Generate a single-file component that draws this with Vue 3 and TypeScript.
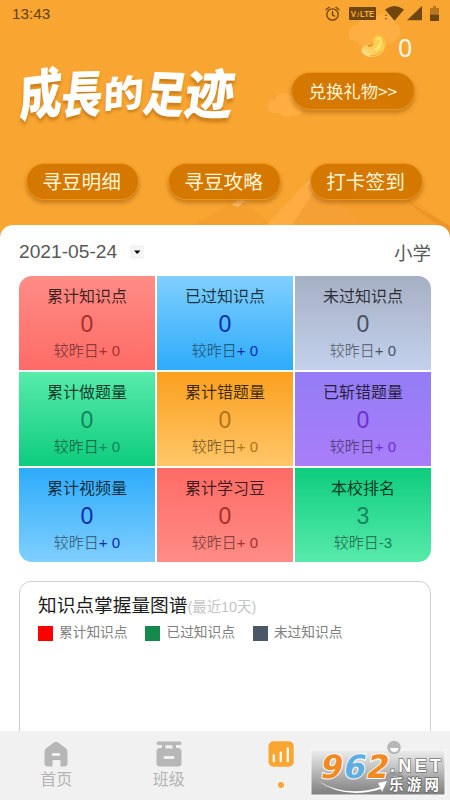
<script setup lang="ts">
interface Tile {
  title: string
  value: string
  change: string
  theme: string
}

const actions: string[] = ['寻豆明细', '寻豆攻略', '打卡签到']

const headline: { char: string; cls: string }[] = [
  { char: '成', cls: 'c1' },
  { char: '長', cls: 'c2' },
  { char: '的', cls: 'c3' },
  { char: '足', cls: 'c4' },
  { char: '迹', cls: 'c5' },
]

const tiles: Tile[] = [
  { title: '累计知识点', value: '0', change: '+ 0', theme: 'red' },
  { title: '已过知识点', value: '0', change: '+ 0', theme: 'blue' },
  { title: '未过知识点', value: '0', change: '+ 0', theme: 'gray' },
  { title: '累计做题量', value: '0', change: '+ 0', theme: 'green' },
  { title: '累计错题量', value: '0', change: '+ 0', theme: 'orange' },
  { title: '已斩错题量', value: '0', change: '+ 0', theme: 'purple' },
  { title: '累计视频量', value: '0', change: '+ 0', theme: 'blue flip' },
  { title: '累计学习豆', value: '0', change: '+ 0', theme: 'red flip' },
  { title: '本校排名', value: '3', change: '-3', theme: 'green flip' },
]

const legend: { label: string; cls: string }[] = [
  { label: '累计知识点', cls: 'l-red' },
  { label: '已过知识点', cls: 'l-green' },
  { label: '未过知识点', cls: 'l-slate' },
]
</script>

<template>
  <div class="screen">
    <header class="hero">
      <svg class="scenery" viewBox="0 0 450 250" width="450" height="250" aria-hidden="true">
        <g fill="#ffae42">
          <path d="M351 40C346 34 349 26 358 25C360 16 370 13 376 17C382 10 394 13 395 23C402 26 402 36 396 40C390 47 382 45 378 43C370 49 360 48 358 42Z" />
          <path d="M268 108C267 102 271 99 275 100C277 93 286 90 291 96C300 94 305 99 303 108C303 115 297 117 292 115C287 118 281 117 279 113C273 114 269 112 268 108Z" />
        </g>
        <path d="M185 230L240 199L277 228L313 176L337 205L369 162L450 228V250H185Z" fill="#f59f2e" />
        <path d="M262 230L313 175L318 190L289 230Z" fill="#ffad43" />
        <path d="M289 230L318 185L340 203L365 230Z" fill="#f5a035" />
        <path d="M231 205L240 199L251 203L244 202L238 207Z" fill="#ffbd69" />
        <path d="M305 186L313 177L315 182Z" fill="#ffc273" />
        <path d="M404 199L450 226V235Z" fill="#ee9427" />
      </svg>

      <div class="status">
        <span class="clock">13:43</span>
        <svg class="status-icons" viewBox="0 0 120 20" width="120" height="20" aria-hidden="true">
          <g fill="none" stroke="#704610" stroke-width="1.3">
            <circle cx="12.5" cy="10.5" r="5.7" />
            <path d="M12.5 7V10.9L15 12.500M5.500 6L9.500 3M15.500 3L19.500 6" />
          </g>
          <rect x="29" y="3" width="27" height="13" rx="1" fill="#704610" />
          <text x="30.8" y="13" class="volte" textLength="23.4" lengthAdjust="spacingAndGlyphs">V♪LTE</text>
          <path d="M65 5.500Q74.500 -1.500 84 5.500L74.500 16.800Z" fill="#704610" />
          <path d="M66 10L67.500 12H64.500ZM66 16L67.500 14H64.500Z" fill="#a76b1b" />
          <path d="M87 16.200L102 2V16.200Z" fill="#704610" />
          <path d="M110 4H113V2H116V4H119V10.500H110Z" fill="#b8771f" />
          <path d="M110 10.500H119V17H110Z" fill="#704610" />
        </svg>
      </div>

      <div class="banner">
        <h1 class="headline">
          <span v-for="h in headline" :key="h.char" :class="h.cls">{{ h.char }}</span>
        </h1>
        <div class="wallet">
          <div class="balance">
            <svg viewBox="0 0 28 26" width="28" height="26" aria-hidden="true">
              <defs>
                <linearGradient id="bean" x1="0" y1="1" x2="1" y2="0">
                  <stop offset="0" stop-color="#fff0ad" />
                  <stop offset=".3" stop-color="#ffcf62" />
                  <stop offset=".7" stop-color="#ffcf4a" />
                  <stop offset="1" stop-color="#f9ad2b" />
                </linearGradient>
              </defs>
              <path d="M1.500 18C1 13.500 5 12 9 13C12 13.500 13 11 13.200 8C14 2.500 19 .8 23 3C27 6 26.500 15 21.500 20.500C16.500 25.500 5 25.500 1.500 18Z" fill="url(#bean)" />
              <path d="M17.500 5.500C21 3.500 22 8 20 12Q18.500 15.500 15 16.500" fill="none" stroke="#ffe679" stroke-width="2.200" stroke-linecap="round" />
              <path d="M8 13Q12 14 12.800 10.500" fill="none" stroke="#d97410" stroke-width="1" />
              <path d="M10 23Q17 23 21 18" fill="none" stroke="#f5a22b" stroke-width="1" />
            </svg>
            <span>0</span>
          </div>
          <button class="pill redeem">兑换礼物&gt;&gt;</button>
        </div>
      </div>

      <div class="actions">
        <button v-for="a in actions" :key="a" class="pill">{{ a }}</button>
      </div>
    </header>

    <main class="sheet">
      <div class="filters">
        <span class="date">2021-05-24</span>
        <span class="drop"><svg viewBox="0 0 14 14" width="14" height="14"><path d="M4 5.500H10.500L7.200 9Z" fill="#000" /></svg></span>
        <span class="grade">小学</span>
      </div>

      <section class="tiles">
        <article v-for="t in tiles" :key="t.title" class="tile" :class="t.theme">
          <h2>{{ t.title }}</h2>
          <strong>{{ t.value }}</strong>
          <p>较昨日<b>{{ t.change }}</b></p>
        </article>
      </section>

      <section class="chart">
        <h3>知识点掌握量图谱<small>(最近10天)</small></h3>
        <ul>
          <li v-for="l in legend" :key="l.label"><i :class="l.cls"></i>{{ l.label }}</li>
        </ul>
      </section>
    </main>

    <nav class="tabs">
      <a class="tab">
        <svg viewBox="0 0 26 26" width="26" height="26">
          <path d="M11 1.400Q13 0 15 1.400L22.500 7Q24.500 8.500 24.500 11V22Q24.500 25.500 21 25.500H17.500V20Q17.500 19 16.500 19H10.500Q9.500 19 9.500 20V25.500H5Q1.500 25.500 1.500 22V11Q1.500 8.500 3.500 7Z" fill="#b7b7b7" />
          <rect x="8.800" y="12" width="8.400" height="3" rx="1.500" fill="#f1f1f1" />
        </svg>
        <span>首页</span>
      </a>
      <a class="tab">
        <svg viewBox="0 0 26 26" width="26" height="26">
          <path d="M2 .5H24Q25.500 .5 25.500 2.200T24 4H20V7H22Q25.500 7 25.500 10.500V22Q25.500 25.500 22 25.500H4Q.5 25.500 .5 22V10.500Q.5 7 4 7H6V4H2Q.5 4 .5 2.200T2 .5Z" fill="#b7b7b7" />
          <path d="M9.500 4.200H16.500V7.500H9.500Z" fill="#f1f1f1" />
          <rect x="7.500" y="15" width="11" height="3" rx="1.500" fill="#f1f1f1" />
        </svg>
        <span>班级</span>
      </a>
      <a class="tab">
        <svg viewBox="0 0 26 26" width="26" height="26">
          <rect x=".5" y=".2" width="25.200" height="25.600" rx="5" fill="#faa632" />
          <path d="M5.800 14.500V20M12.800 11.500V20M19.800 7.500V20" stroke="#fff8ec" stroke-width="2.400" stroke-linecap="round" />
        </svg>
        <i class="dot"></i>
      </a>
      <svg class="watermark" viewBox="0 0 134 45" width="134" height="45">
        <defs>
          <linearGradient id="steel" x1="0" y1="0" x2="0" y2="1">
            <stop offset="0" stop-color="#eeeeee" />
            <stop offset=".45" stop-color="#bcbcbc" />
            <stop offset="1" stop-color="#7d7d7d" />
          </linearGradient>
        </defs>
        <rect width="134" height="45" fill="url(#steel)" stroke="#f8f8f8" stroke-width="1" />
        <circle cx="83" cy="-2.500" r="6.800" fill="#b7b7b7" />
        <path d="M79 -2H87.500Q87 2 83.200 2T79 -2Z" fill="#fff" />
        <path d="M74 32Q76 24 83 24T94 31" fill="none" stroke="#9b9b9b" stroke-width="4" />
        <g class="numerals" transform="translate(8 27.500) skewX(-12)">
          <text x="0" y="0" textLength="22" lengthAdjust="spacingAndGlyphs" fill="#f28a21">9</text>
          <text x="23" y="0" textLength="22" lengthAdjust="spacingAndGlyphs" fill="#5eaee0">6</text>
          <text x="46" y="0" textLength="22" lengthAdjust="spacingAndGlyphs" fill="#f28a21">2</text>
        </g>
        <path d="M7 31Q36 48 69 37L67 33L76 31L71 42L70 39Q34 50 7 31Z" fill="#fff" />
        <text x="79" y="22" class="net" textLength="51" lengthAdjust="spacing">.NET</text>
        <text x="78" y="39.500" class="leyou" textLength="50" lengthAdjust="spacing">乐游网</text>
      </svg>
    </nav>
  </div>
</template>

<style>
body {
  margin: 0;
}
</style>

<style scoped>
* {
  box-sizing: border-box;
}
.screen {
  position: relative;
  width: 450px;
  height: 800px;
  overflow: hidden;
  display: flex;
  flex-direction: column;
  background: #f8a531;
  font-family: "Liberation Sans", "Noto Sans CJK SC", sans-serif;
  font-weight: 400;
}
.hero {
  height: 225px;
  flex: none;
}
.scenery {
  position: absolute;
  left: 0;
  top: 0;
}
.status {
  position: relative;
  height: 28px;
  padding: 4px 10px 0 12px;
  display: flex;
  justify-content: space-between;
}
.clock {
  font-size: 15.3px;
  line-height: 20px;
  color: #65400f;
}
.volte {
  font: bold 9px "Liberation Sans", "DejaVu Sans", sans-serif;
  fill: #faad45;
}
.banner {
  position: relative;
  display: flex;
  justify-content: space-between;
  height: 135px;
}
.headline {
  display: flex;
  margin: 31px 0 0 18px;
  height: 65px;
  font: 900 46px/64px "Noto Sans CJK SC", sans-serif;
  color: #fff;
  text-shadow: 0 3px 3px rgba(151, 83, 0, 0.45);
}
.headline span {
  display: block;
  width: 42px;
  transform-origin: center;
}
.headline .c1 {
  transform: rotate(-7deg) skewX(-8deg) scale(0.94, 1.16);
}
.headline .c2 {
  width: 41px;
  transform: rotate(-2deg) skewX(-9deg) scale(0.9, 1.08);
}
.headline .c3 {
  width: 42px;
  transform: rotate(-6deg) skewX(-8deg) scale(0.88, 0.8);
}
.headline .c4 {
  width: 44px;
  transform: rotate(2deg) skewX(-8deg) scale(0.9, 1.06);
}
.headline .c5 {
  transform: skewX(-8deg) scale(1.08, 1.16);
}
.wallet {
  width: 159px;
  padding-top: 5px;
}
.balance {
  height: 30px;
  padding-left: 69px;
  display: flex;
  align-items: flex-start;
  gap: 10px;
}
.balance span {
  margin-top: -1px;
  font: 400 25px/30px "Noto Sans", "Open Sans", sans-serif;
  color: #fff8e8;
}
.pill {
  width: 113px;
  height: 37px;
  padding: 0 2px 1px 0;
  border: 1px solid #ed951e;
  border-radius: 19px;
  background: #d47800;
  box-shadow: 0 3px 4px rgba(143, 79, 0, 0.48);
  color: #fff4d5;
  font: 400 19.7px/34px "Noto Sans CJK SC", sans-serif;
  text-align: center;
  white-space: nowrap;
}
.redeem {
  display: block;
  width: 124px;
  height: 38px;
  margin-top: 9px;
  padding-right: 0;
  font-family: "Noto Sans CJK SC", sans-serif;
  font-size: 17.3px;
}
.actions {
  position: relative;
  display: flex;
  gap: 29px;
  padding-left: 26px;
}
.sheet {
  position: relative;
  flex: 1;
  padding: 0 19px;
  background: #fff;
  border-radius: 13px 13px 0 0;
}
.filters {
  height: 51px;
  display: flex;
  align-items: center;
  color: #585858;
  padding-top: 2px;
}
.date {
  font-size: 19.2px;
  width: 111px;
}
.drop {
  width: 14px;
  height: 14px;
  background: #f4f4f4;
}
.drop svg {
  display: block;
}
.grade {
  margin-left: auto;
  font-size: 18.5px;
}
.tiles {
  display: grid;
  grid-template-columns: repeat(3, 1fr);
  grid-template-rows: repeat(3, 1fr);
  gap: 2px;
  height: 286px;
  border-radius: 13px;
  overflow: hidden;
}
.tile {
  display: flex;
  flex-direction: column;
  align-items: center;
  background: linear-gradient(var(--from), var(--to));
}
.tile.flip {
  background: linear-gradient(var(--to), var(--from));
}
.tile h2 {
  margin: 10px 0 0;
  font-size: 16px;
  line-height: 22px;
  font-weight: 400;
  color: rgba(0, 0, 0, 0.76);
}
.tile strong {
  font-size: 23px;
  line-height: 33px;
  font-weight: 400;
  color: var(--num);
}
.tile p {
  margin: 0;
  font-size: 15px;
  line-height: 20px;
  color: rgba(0, 0, 0, 0.47);
}
.tile b {
  font-weight: 400;
  color: var(--num);
}
.red {
  --from: #ff8c86;
  --to: #ff6b66;
  --num: #a83028;
}
.blue {
  --from: #80cfff;
  --to: #2dabfa;
  --num: #0a2cb0;
}
.gray {
  --from: #a6b0c4;
  --to: #c3d1ed;
  --num: #46525f;
}
.green {
  --from: #58ebab;
  --to: #0dcc7e;
  --num: #12845a;
}
.orange {
  --from: #fba01e;
  --to: #ffc669;
  --num: #b37416;
}
.purple {
  --from: #937df6;
  --to: #aa7dfa;
  --num: #702fd0;
}
.chart {
  margin-top: 19px;
  height: 180px;
  padding: 11px 18px;
  border: 1px solid #cfcfcf;
  border-radius: 12px;
}
.chart h3 {
  margin: 0;
  font-size: 18.7px;
  line-height: 25px;
  font-weight: 400;
  color: #1c1c1c;
  white-space: nowrap;
}
.chart small {
  font-size: 14.4px;
  color: #c4c4c4;
}
.chart ul {
  display: flex;
  gap: 18px;
  margin: 5px 0 0;
  padding: 0;
  list-style: none;
}
.chart li {
  display: flex;
  align-items: center;
  gap: 6px;
  height: 16px;
  font-size: 13.7px;
  line-height: 16px;
  color: #808080;
}
.chart i {
  width: 15px;
  height: 15px;
}
.l-red {
  background: #f00;
}
.l-green {
  background: #168a4c;
}
.l-slate {
  background: #4b5868;
}
.tabs {
  position: absolute;
  left: 0;
  right: 0;
  bottom: 0;
  height: 69px;
  display: grid;
  grid-template-columns: repeat(4, 1fr);
  background: #f1f1f1;
}
.tab {
  display: flex;
  flex-direction: column;
  align-items: center;
  padding-top: 10px;
  font-size: 16px;
  line-height: 26px;
  color: #b4b4b4;
}
.tab svg {
  flex: none;
}
.dot {
  width: 6px;
  height: 6px;
  margin-top: 15px;
  border-radius: 50%;
  background: #faa632;
}
.watermark {
  position: absolute;
  left: 311px;
  top: 19px;
  overflow: visible;
}
.numerals text {
  font: bold 32px "DejaVu Sans", sans-serif;
  stroke: #fff;
  stroke-width: 2px;
  paint-order: stroke;
}
.net {
  font: bold 18px "Liberation Sans", sans-serif;
  fill: #fff;
  stroke: #777;
  stroke-width: 1.5px;
  paint-order: stroke;
}
.leyou {
  font: bold 14.5px "Noto Sans CJK SC", sans-serif;
  fill: #fff;
  stroke: #666;
  stroke-width: 1.5px;
  paint-order: stroke;
}
</style>
